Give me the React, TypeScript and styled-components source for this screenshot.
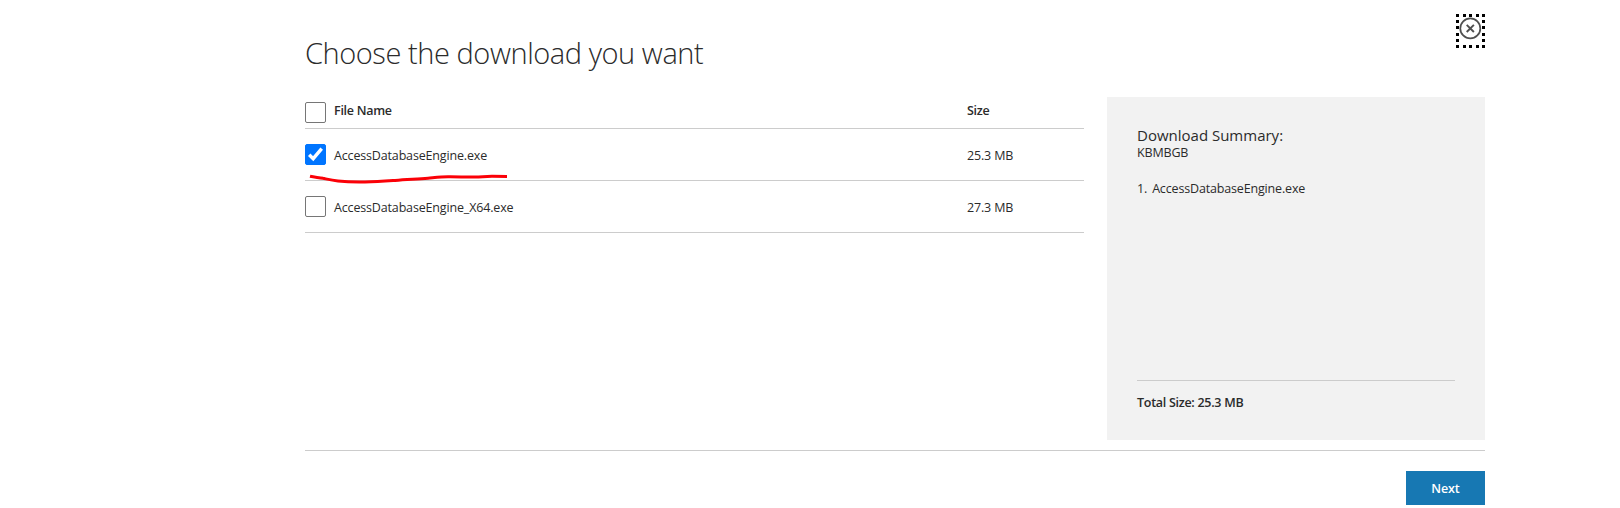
import React from "react";
import styled, { createGlobalStyle } from "styled-components";

const GlobalStyle = createGlobalStyle`
  * { box-sizing: border-box; }
  body {
    margin: 0;
    background: #fff;
    color: #2b2b2b;
    font-family: "Open Sans", "Noto Sans", sans-serif;
    font-size: 12.5px;
    line-height: 18px;
  }
`;

const Dialog = styled.main`
  position: relative;
  width: 1180px;
  height: 508px;
  margin-left: 305px;
  padding-top: 32px;
`;

const CloseButton = styled.button`
  position: absolute;
  top: 14px;
  right: 0;
  width: 29px;
  height: 34px;
  padding: 0;
  border: 0;
  background: none;
  svg { display: block; }
`;

const Title = styled.h1`
  margin: 0;
  height: 65px;
  font-size: 29px;
  font-weight: 300;
  line-height: 42px;
  letter-spacing: -0.44px;
  white-space: nowrap;
`;

const Columns = styled.div`
  display: flex;
  justify-content: space-between;
  height: 343px;
`;

const FileTable = styled.div`
  position: relative;
  width: 779px;
`;

const Row = styled.div<{ $header?: boolean }>`
  display: grid;
  grid-template-columns: 29px 633px 1fr;
  align-items: start;
  height: ${(p) => (p.$header ? 32 : 52)}px;
  padding-top: ${(p) => (p.$header ? 5 : 15)}px;
  border-bottom: 1px solid #ccc;
  > span + span { margin-top: ${(p) => (p.$header ? 0 : 3)}px; }
`;

const Label = styled.span<{ $strong?: boolean }>`
  font-weight: ${(p) => (p.$strong ? 600 : 370)};
  letter-spacing: ${(p) => (p.$strong ? -0.28 : -0.16)}px;
  white-space: nowrap;
`;

const CheckBox = styled.span<{ $checked?: boolean }>`
  display: block;
  width: 21px;
  height: 21px;
  border: 1px solid ${(p) => (p.$checked ? "#0075ff" : "#767676")};
  border-radius: 2px;
  background: ${(p) => (p.$checked ? "#0075ff" : "#fff")};
  svg { display: block; margin: -1px; }
`;

const Underline = styled.svg`
  position: absolute;
  left: 0;
  top: 72px;
`;

const Summary = styled.aside`
  display: flex;
  flex-direction: column;
  width: 378px;
  padding: 28px 30px 27px;
  background: #f2f2f2;
`;

const SummaryTitle = styled.h2`
  margin: 0;
  font-size: 15px;
  font-weight: 370;
  line-height: 20px;
  height: 19px;
  white-space: nowrap;
`;

const SummaryList = styled.ol`
  display: flex;
  flex: 1;
  gap: 5px;
  margin: 0;
  padding: 18px 0 0;
  list-style: none;
`;

const Total = styled.div`
  padding-top: 13px;
  height: 33px;
  border-top: 1px solid #ccc;
`;

const Footer = styled.footer`
  display: flex;
  justify-content: flex-end;
  margin-top: 10px;
  padding-top: 20px;
  border-top: 1px solid #ccc;
`;

const NextButton = styled.button`
  width: 79px;
  height: 34px;
  padding: 1px 0 0;
  border: 0;
  background: #1778b3;
  color: #fff;
  font: 550 12.5px/33px "Open Sans", "Noto Sans", sans-serif;
  letter-spacing: -0.1px;
`;

const files = [
  { name: "AccessDatabaseEngine.exe", size: "25.3 MB", checked: true },
  { name: "AccessDatabaseEngine_X64.exe", size: "27.3 MB", checked: false },
];

function Check({ checked }: { checked?: boolean }) {
  return (
    <CheckBox $checked={checked}>
      {checked && (
        <svg width="21" height="21" viewBox="0 0 21 21">
          <path d="M4.2 10.7l4 4L16.7 4.6" fill="none" stroke="#fff" strokeWidth="3.4" />
        </svg>
      )}
    </CheckBox>
  );
}

export default function App() {
  return (
    <>
      <GlobalStyle />
      <Dialog>
        <CloseButton aria-label="Close">
          <svg width="29" height="34" viewBox="0 0 29 34">
            <g stroke="#000" strokeWidth="3" shapeRendering="crispEdges">
              <path d="M0 1.5H29M0 32.5H29" strokeDasharray="3 3.5" />
              <path d="M1.5 0V34M27.5 0V34" strokeDasharray="3 3.2" />
            </g>
            <circle cx="14.3" cy="14.4" r="10" fill="none" stroke="#505050" strokeWidth="1.7" />
            <path d="M10.7 10.8l7.2 7.2M17.9 10.8l-7.2 7.2" stroke="#505050" strokeWidth="1.9" />
          </svg>
        </CloseButton>
        <Title>Choose the download you want</Title>
        <Columns>
          <FileTable>
            <Row $header>
              <Check />
              <Label $strong>File Name</Label>
              <Label $strong>Size</Label>
            </Row>
            {files.map((f) => (
              <Row key={f.name}>
                <Check checked={f.checked} />
                <Label>{f.name}</Label>
                <Label>{f.size}</Label>
              </Row>
            ))}
            <Underline width="210" height="20" viewBox="0 0 210 20">
              <path
                d="M5 7.3C10 8.5 14 8.3 18 9.3C24 10.6 27 11.4 33 12C42 13 51 13.2 60 13C72 12.9 80 12.2 90 11.4C102 10.4 112 10.1 123 9.2C130 8.6 136 7.9 143 7.8C153 7.7 161 8.2 170 8C177 7.8 181 7.3 187 7.3L202 7.5"
                fill="none" stroke="#fb0007" strokeWidth="3"
              />
            </Underline>
          </FileTable>
          <Summary>
            <SummaryTitle>Download Summary:</SummaryTitle>
            <Label>KBMBGB</Label>
            <SummaryList>
              <Label as="li">1.</Label>
              <Label as="li">AccessDatabaseEngine.exe</Label>
            </SummaryList>
            <Total>
              <Label $strong>Total Size: 25.3 MB</Label>
            </Total>
          </Summary>
        </Columns>
        <Footer>
          <NextButton>Next</NextButton>
        </Footer>
      </Dialog>
    </>
  );
}
